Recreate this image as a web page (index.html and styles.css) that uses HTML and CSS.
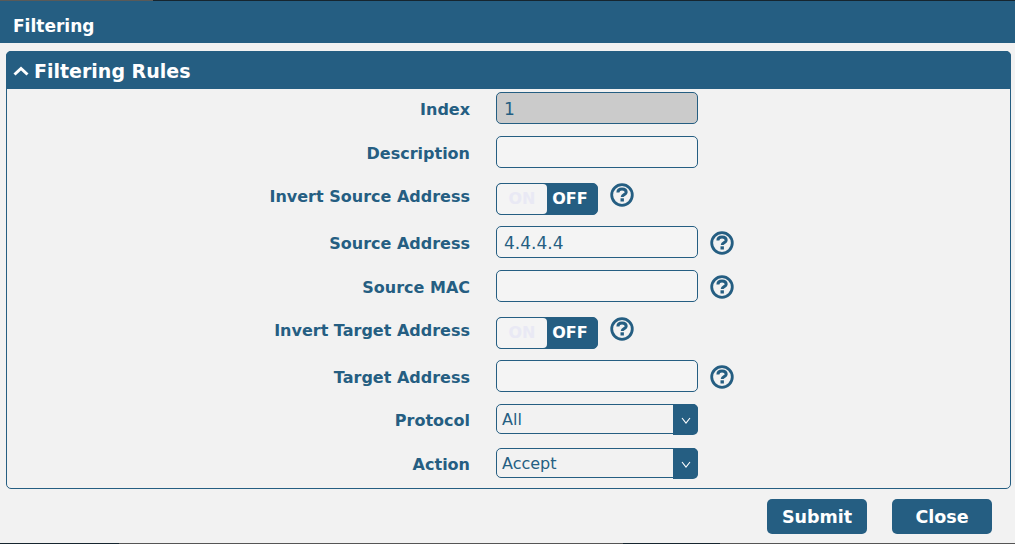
FILE: index.html
```html
<!DOCTYPE html>
<html lang="en">
<head>
<meta charset="utf-8">
<title>Filtering</title>
<link rel="stylesheet" href="styles.css">
</head>
<body>
<div class="strip"></div>
<header class="title">Filtering</header>
<section class="panel">
  <h2 class="panel-head">
    <svg class="chev" width="16" height="10" viewBox="0 0 16 10"><path d="M1.500 8.500L8 2.500L14.500 8.500" fill="none" stroke="#fff" stroke-width="3"/></svg>
    <span class="panel-title">Filtering Rules</span>
  </h2>
  <form class="form">
    <div class="row"><label class="lbl">Index</label><div class="input disabled">1</div></div>
    <div class="row"><label class="lbl">Description</label><div class="input"></div></div>
    <div class="row tall"><label class="lbl">Invert Source Address</label>
      <div class="toggle"><span class="on">ON</span><span class="off">OFF</span></div>
      <svg class="help" viewBox="0 0 24 24"><circle cx="12" cy="12" r="10.300" fill="none" stroke="#255e82" stroke-width="2.800"/><path d="M7.900 9.500C7.900 7.200 9.800 6 12 6C14.400 6 16.200 7.200 16.200 9.300C16.200 11.800 12.200 11.500 12.200 14" fill="none" stroke="#255e82" stroke-width="3"/><rect x="10.500" y="15.300" width="3.400" height="3.200" fill="#255e82"/></svg>
    </div>
    <div class="row"><label class="lbl">Source Address</label><div class="input">4.4.4.4</div>
      <svg class="help wide" viewBox="0 0 24 24"><circle cx="12" cy="12" r="10.300" fill="none" stroke="#255e82" stroke-width="2.800"/><path d="M7.900 9.500C7.900 7.200 9.800 6 12 6C14.400 6 16.200 7.200 16.200 9.300C16.200 11.800 12.200 11.500 12.200 14" fill="none" stroke="#255e82" stroke-width="3"/><rect x="10.500" y="15.300" width="3.400" height="3.200" fill="#255e82"/></svg>
    </div>
    <div class="row"><label class="lbl">Source MAC</label><div class="input"></div>
      <svg class="help wide" viewBox="0 0 24 24"><circle cx="12" cy="12" r="10.300" fill="none" stroke="#255e82" stroke-width="2.800"/><path d="M7.900 9.500C7.900 7.200 9.800 6 12 6C14.400 6 16.200 7.200 16.200 9.300C16.200 11.800 12.200 11.500 12.200 14" fill="none" stroke="#255e82" stroke-width="3"/><rect x="10.500" y="15.300" width="3.400" height="3.200" fill="#255e82"/></svg>
    </div>
    <div class="row tall"><label class="lbl">Invert Target Address</label>
      <div class="toggle"><span class="on">ON</span><span class="off">OFF</span></div>
      <svg class="help" viewBox="0 0 24 24"><circle cx="12" cy="12" r="10.300" fill="none" stroke="#255e82" stroke-width="2.800"/><path d="M7.900 9.500C7.900 7.200 9.800 6 12 6C14.400 6 16.200 7.200 16.200 9.300C16.200 11.800 12.200 11.500 12.200 14" fill="none" stroke="#255e82" stroke-width="3"/><rect x="10.500" y="15.300" width="3.400" height="3.200" fill="#255e82"/></svg>
    </div>
    <div class="row"><label class="lbl">Target Address</label><div class="input"></div>
      <svg class="help wide" viewBox="0 0 24 24"><circle cx="12" cy="12" r="10.300" fill="none" stroke="#255e82" stroke-width="2.800"/><path d="M7.900 9.500C7.900 7.200 9.800 6 12 6C14.400 6 16.200 7.200 16.200 9.300C16.200 11.800 12.200 11.500 12.200 14" fill="none" stroke="#255e82" stroke-width="3"/><rect x="10.500" y="15.300" width="3.400" height="3.200" fill="#255e82"/></svg>
    </div>
    <div class="row choice"><label class="lbl">Protocol</label>
      <div class="select"><span class="val">All</span><span class="arrow"><svg width="10" height="7" viewBox="0 0 10 7"><path d="M1 1L5 6L9 1" fill="none" stroke="#fff" stroke-width="1.100"/></svg></span></div>
    </div>
    <div class="row choice last"><label class="lbl">Action</label>
      <div class="select"><span class="val">Accept</span><span class="arrow"><svg width="10" height="7" viewBox="0 0 10 7"><path d="M1 1L5 6L9 1" fill="none" stroke="#fff" stroke-width="1.100"/></svg></span></div>
    </div>
  </form>
</section>
<footer class="foot">
  <button class="btn" type="button">Submit</button>
  <button class="btn" type="button">Close</button>
</footer>
<div class="strip-bottom"></div>
</body>
</html>
```
FILE: styles.css
```css
* { box-sizing: border-box; }
html, body { margin: 0; height: 544px; overflow: hidden; }
body {
  background: #f2f2f2;
  color: #255e82;
  font-family: "DejaVu Sans", sans-serif;
  display: flex;
  flex-direction: column;
}
.strip {
  height: 1px;
  flex: none;
  background: linear-gradient(to right, #5a5a58 0 153px, #16252f 153px);
}
.title {
  height: 42px;
  flex: none;
  background: #255e82;
  color: #fff;
  font-weight: 700;
  font-size: 17px;
  padding: 7px 0 0 13px;
  display: flex;
  align-items: center;
}
.panel {
  margin: 8px 4px 0 6px;
  height: 438px;
  flex: none;
  border: 1px solid #255e82;
  border-radius: 5px;
  display: flex;
  flex-direction: column;
}
.panel-head {
  margin: -1px -1px 0;
  height: 38px;
  flex: none;
  background: #255e82;
  border-radius: 5px 5px 0 0;
  color: #fff;
  font-size: 19px;
  font-weight: 700;
  display: flex;
  align-items: center;
  gap: 6px;
  padding-left: 7px;
}
.panel-title { margin: 2px 0 0 -1px; }
.chev { flex: none; margin-top: 2px; }
.form { padding-top: 3px; }
.row { height: 44px; display: flex; align-items: flex-start; }
.row.tall { height: 46px; padding-top: 3px; }
.row.last { height: 33px; }
.lbl {
  width: 463px;
  flex: none;
  text-align: right;
  font-weight: 700;
  font-size: 16px;
  line-height: 36px;
}
.tall .lbl { margin-top: -3px; line-height: 34px; }
.choice .lbl { line-height: 34px; }
.input {
  margin-left: 26px;
  width: 202px;
  height: 32px;
  border: 1px solid #255e82;
  border-radius: 5px;
  font-size: 17px;
  line-height: 33px;
  padding-left: 7px;
  background: #f4f4f4;
}
.input.disabled { background: #cbcbcb; }
.toggle {
  margin-left: 26px;
  width: 102px;
  height: 32px;
  border: 1px solid #255e82;
  border-radius: 5px;
  display: flex;
  background: #255e82;
  overflow: hidden;
  font-weight: 700;
  font-size: 16px;
  line-height: 30px;
  text-align: center;
}
.on { width: 50px; background: #f4f4f4; border-radius: 4px; color: #e9e9f4; }
.off { flex: 1; color: #fff; padding-right: 4px; }
.help { width: 24px; height: 24px; margin-left: 12px; margin-top: 0; flex: none; }
.help.wide { margin-top: 5px; }
.select {
  margin-left: 26px;
  width: 202px;
  height: 30px;
  border: 1px solid #255e82;
  border-radius: 5px;
  display: flex;
  font-size: 16px;
  line-height: 30px;
}
.val { flex: 1; padding-left: 5px; }
.arrow {
  width: 25px;
  height: 31px;
  margin: -1px -1px -1px 0;
  background: #255e82;
  border-radius: 0 5px 5px 0;
  display: flex;
  align-items: center;
  justify-content: center;
  padding-top: 2px;
}
.foot {
  flex: none;
  display: flex;
  justify-content: flex-end;
  gap: 25px;
  padding: 10px 23px 0 0;
}
.btn {
  width: 100px;
  height: 35px;
  border: 0;
  border-radius: 5px;
  background: #255e82;
  color: #fff;
  font-family: inherit;
  font-weight: 700;
  font-size: 17.500px;
  padding: 0;
}
.strip-bottom {
  position: absolute;
  left: 0;
  right: 0;
  top: 543px;
  height: 1px;
  background: linear-gradient(to right, #16252f 0 119px, #555 119px 623px, #16252f 623px 720px, #555 720px);
}
```
